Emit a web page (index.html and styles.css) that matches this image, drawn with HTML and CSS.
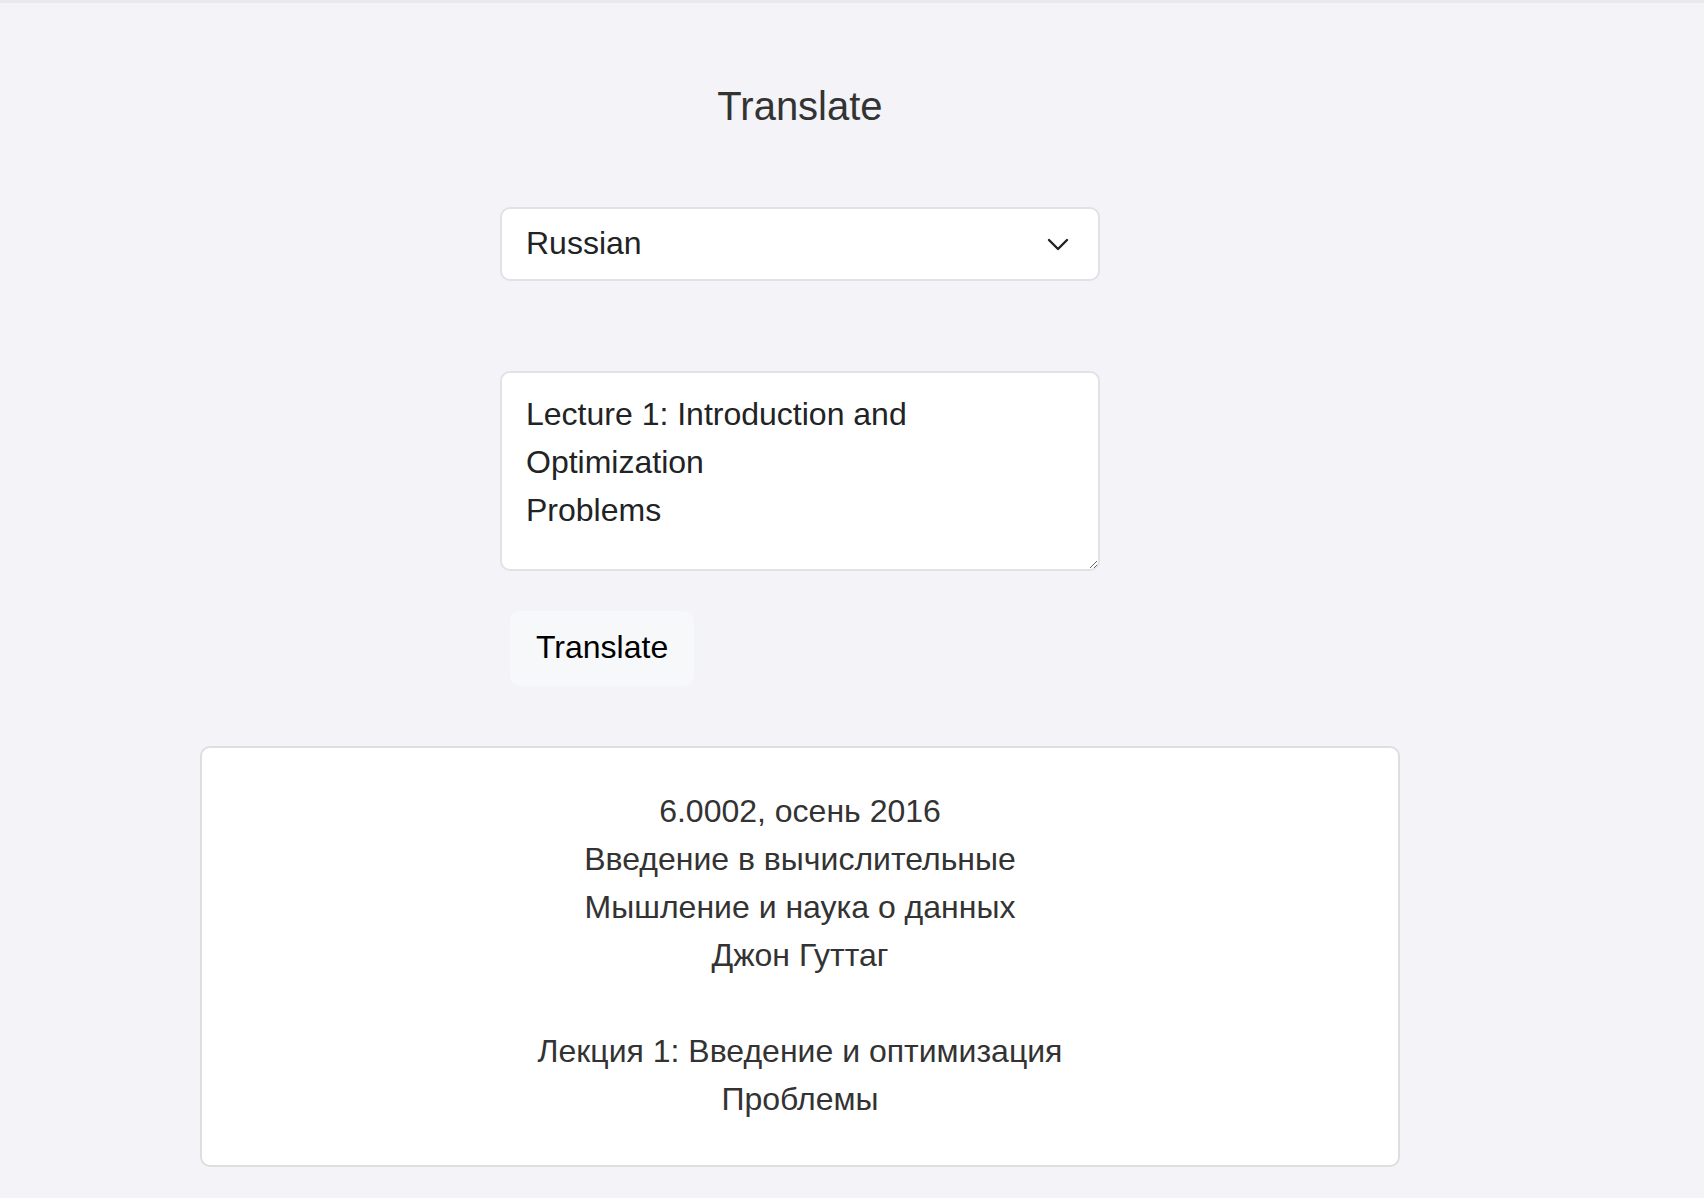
FILE: index.html
```html
<!DOCTYPE html>
<html lang="en">
<head>
<meta charset="utf-8">
<title>Translate</title>
<link rel="stylesheet" href="styles.css">
</head>
<body>
<main class="page">
  <h1 class="title">Translate</h1>
  <form class="form">
    <div class="select" role="combobox" aria-expanded="false">
      <span class="select-value">Russian</span>
      <svg class="chevron" width="22" height="14" viewBox="0 0 22 14" aria-hidden="true">
        <polyline points="2,2 11,11 20,2" fill="none" stroke="#222" stroke-width="2.4" stroke-linecap="round" stroke-linejoin="round"/>
      </svg>
    </div>
    <textarea class="source">Lecture 1: Introduction and Optimization
Problems</textarea>
    <button type="button" class="btn">Translate</button>
  </form>
  <section class="result">
    <p class="result-text">6.0002, осень 2016<br>Введение в вычислительные<br>Мышление и наука о данных<br>Джон Гуттаг<br><br>Лекция 1: Введение и оптимизация<br>Проблемы</p>
  </section>
</main>
</body>
</html>
```

FILE: styles.css
```css
html, body {
  margin: 0;
  padding: 0;
}

body {
  background: #f3f3f8;
  border-top: 3px solid #e8e8ee;
  font-family: "Liberation Sans", Arial, sans-serif;
  color: #333;
}

.page {
  width: 1600px;
  display: flex;
  flex-direction: column;
  align-items: center;
}

.title {
  margin: 80px 0 0;
  font-size: 40px;
  line-height: 46px;
  font-weight: normal;
  color: #333;
}

.form {
  width: 600px;
  margin: 78px 0 0;
  display: flex;
  flex-direction: column;
  align-items: flex-start;
}

.select {
  box-sizing: border-box;
  width: 600px;
  height: 74px;
  background: #fff;
  border: 2px solid #dfe2e6;
  border-radius: 10px;
  padding: 0 29px 0 24px;
  display: flex;
  align-items: center;
  justify-content: space-between;
  font-size: 32px;
  color: #212325;
}

.select-value {
  margin-top: -2px;
}

.chevron {
  display: block;
  margin-top: 1px;
}

.source {
  box-sizing: border-box;
  display: block;
  width: 600px;
  height: 200px;
  margin-top: 90px;
  padding: 17px 24px;
  background: #fff;
  border: 2px solid #dfe2e6;
  border-radius: 10px;
  font-family: "Liberation Sans", Arial, sans-serif;
  font-size: 32px;
  line-height: 48px;
  color: #212325;
  outline: none;
}

.btn {
  box-sizing: border-box;
  margin: 40px 0 0 10px;
  width: 184px;
  height: 75px;
  padding: 0 24px 2px 26px;
  border: none;
  border-radius: 10px;
  background: #f7f8fa;
  font-family: "Liberation Sans", Arial, sans-serif;
  font-size: 32px;
  color: #000;
  text-align: left;
}

.result {
  box-sizing: border-box;
  width: 1200px;
  margin-top: 60px;
  padding: 39px 20px 42px;
  background: #fff;
  border: 2px solid #dedede;
  border-radius: 10px;
}

.result-text {
  margin: 0;
  text-align: center;
  font-size: 32px;
  line-height: 48px;
  color: #333;
}
```
